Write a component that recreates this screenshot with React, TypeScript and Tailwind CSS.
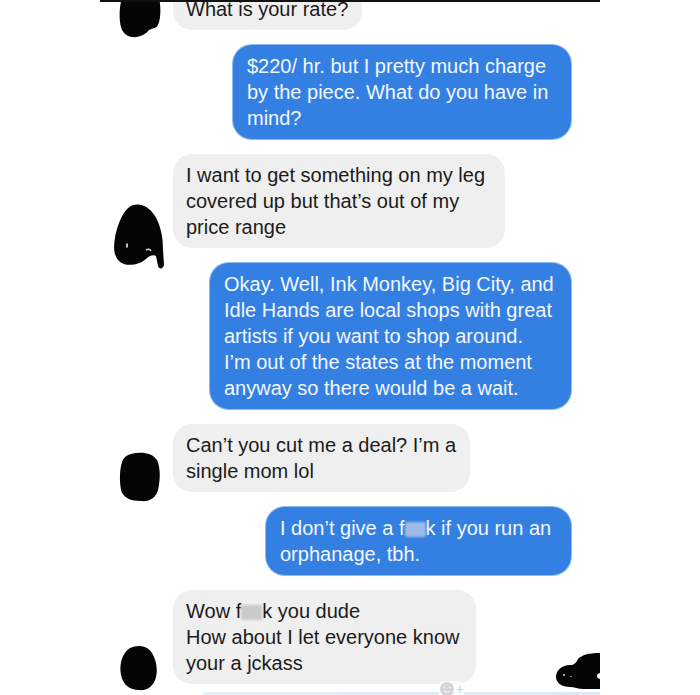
import React from "react";

const font = "font-['Liberation_Sans',Arial,sans-serif]";

function Blob({ kind }: { kind: number }) {
  if (kind === 1)
    return (
      <svg width="42" height="40" viewBox="0 0 42 40" className="ml-[19px] mb-[-8px]">
        <path d="M3 0 H40 C42 8 42 20 39 27 C37 31 33 30 30 32 C27 36 20 40 13 39 C6 38 2 33 1 24 C0 16 1 6 3 0 Z" fill="#050505" />
      </svg>
    );
  if (kind === 2)
    return (
      <svg width="52" height="66" viewBox="0 0 52 66" className="ml-[13px] mb-[-22px]">
        <path d="M18 2 C26 -2 36 2 42 12 C48 22 50 34 50 46 L51 60 C51 65 46 66 45 62 L43 52 C40 50 36 52 33 55 C26 61 14 63 7 58 C1 53 0 44 2 34 C4 22 10 6 18 2 Z" fill="#050505" />
        <path d="M14 40 L14 43" stroke="#fff" strokeWidth="1.5" strokeLinecap="round" />
        <path d="M33 46 C35 45 37 45 38 47" stroke="#ddd" strokeWidth="1.5" fill="none" />
      </svg>
    );
  if (kind === 3)
    return (
      <svg width="42" height="50" viewBox="0 0 42 50" className="ml-[19px] mb-[-10px]">
        <path d="M12 2 C22 -1 34 1 38 8 C42 16 41 30 39 38 C37 46 30 50 22 49 C12 49 4 46 2 38 C0 28 1 16 3 10 C5 5 8 3 12 2 Z" fill="#050505" />
      </svg>
    );
  return (
    <svg width="38" height="46" viewBox="0 0 38 46" className="ml-[20px] mb-[-7px]">
      <path d="M10 3 C18 -1 28 1 32 8 C36 14 38 24 36 32 C34 41 27 46 19 45 C10 45 3 40 1 30 C-1 20 2 8 10 3 Z" fill="#050505" />
    </svg>
  );
}

function Gray({ w, children, extra }: { w: string; children: React.ReactNode; extra?: React.ReactNode }) {
  return (
    <div className={`relative ${w} rounded-[19px] bg-[#efefef] px-[13px] py-[8px] text-[20px] leading-[26px] text-[#1b1b1b] whitespace-nowrap`}>
      {children}
      {extra}
    </div>
  );
}

function Blue({ w, children }: { w: string; children: React.ReactNode }) {
  return (
    <div className="flex justify-end pr-[29px]">
      <div className={`${w} rounded-[19px] bg-[#3480e2] ring-1 ring-[#8dbaf0] px-[14px] py-[8px] text-[20px] leading-[26px] text-[#f3f7ff] whitespace-nowrap`}>
        {children}
      </div>
    </div>
  );
}

function Censor({ c }: { c: string }) {
  return <span className={`inline-block w-[21px] h-[15px] align-[-2px] rounded-[2px] blur-[1px] ${c}`} />;
}

export default function App() {
  return (
    <div className={`w-[700px] h-[695px] bg-white overflow-hidden ${font}`}>
      <div className="ml-[100px] w-[500px] h-[695px] border-t-2 border-[#111] overflow-hidden flex flex-col gap-[15px]">
        <div className="flex items-end mt-[-14px]">
          <div className="w-[73px] flex-none">
            <Blob kind={1} />
          </div>
          <Gray w="w-[189px]">What is your rate?</Gray>
        </div>

        <Blue w="w-[338px]">
          $220/ hr. but I pretty much charge
          <br />
          by the piece. What do you have in
          <br />
          mind?
        </Blue>

        <div className="flex items-end">
          <div className="w-[73px] flex-none">
            <Blob kind={2} />
          </div>
          <Gray w="w-[332px]">
            I want to get something on my leg
            <br />
            covered up but that’s out of my
            <br />
            price range
          </Gray>
        </div>

        <Blue w="w-[361px]">
          Okay. Well, Ink Monkey, Big City, and
          <br />
          Idle Hands are local shops with great
          <br />
          artists if you want to shop around.
          <br />
          I’m out of the states at the moment
          <br />
          anyway so there would be a wait.
        </Blue>

        <div className="flex items-end">
          <div className="w-[73px] flex-none">
            <Blob kind={3} />
          </div>
          <Gray w="w-[297px]">
            Can’t you cut me a deal? I’m a
            <br />
            single mom lol
          </Gray>
        </div>

        <Blue w="w-[305px]">
          I don’t give a f<Censor c="bg-[#9cbbe6]" />k if you run an
          <br />
          orphanage, tbh.
        </Blue>

        <div className="flex items-end">
          <div className="w-[73px] flex-none">
            <Blob kind={4} />
          </div>
          <Gray
            w="w-[303px]"
            extra={
              <div className="absolute right-[10px] bottom-[-13px] flex items-center gap-[1px] bg-white/70 rounded-full px-[2px]">
                <svg width="16" height="16" viewBox="0 0 16 16">
                  <circle cx="8" cy="8" r="7" fill="#d4d4d4" />
                  <circle cx="5.5" cy="6.5" r="1" fill="#f4f4f4" />
                  <circle cx="10.5" cy="6.5" r="1" fill="#f4f4f4" />
                  <path d="M5 10 Q8 12.5 11 10" stroke="#f4f4f4" strokeWidth="1.2" fill="none" />
                </svg>
                <span className="text-[14px] leading-[14px] text-[#cfcfcf]">+</span>
              </div>
            }
          >
            Wow f<Censor c="bg-[#cacaca]" />k you dude
            <br />
            How about I let everyone know
            <br />
            your a jckass
          </Gray>
          <div className="flex-1" />
          <svg width="44" height="36" viewBox="0 0 44 36" className="mb-[-5px] flex-none">
            <path d="M22 6 C26 2 32 0 44 0 L44 20 C40 21 40 25 44 26 L44 36 L28 36 C22 36 18 34 14 34 C6 34 0 30 0 24 C0 17 6 12 14 12 C18 12 20 10 22 6 Z" fill="#050505" />
            <circle cx="8" cy="22" r="1" fill="#ddd" />
            <circle cx="15" cy="23.5" r="0.8" fill="#aaa" />
          </svg>
        </div>

        <div className="ml-[103px] mt-[-7px] h-[4px] bg-gradient-to-r from-[#e8f0f8] to-[#dce9f6]" />
      </div>
    </div>
  );
}
